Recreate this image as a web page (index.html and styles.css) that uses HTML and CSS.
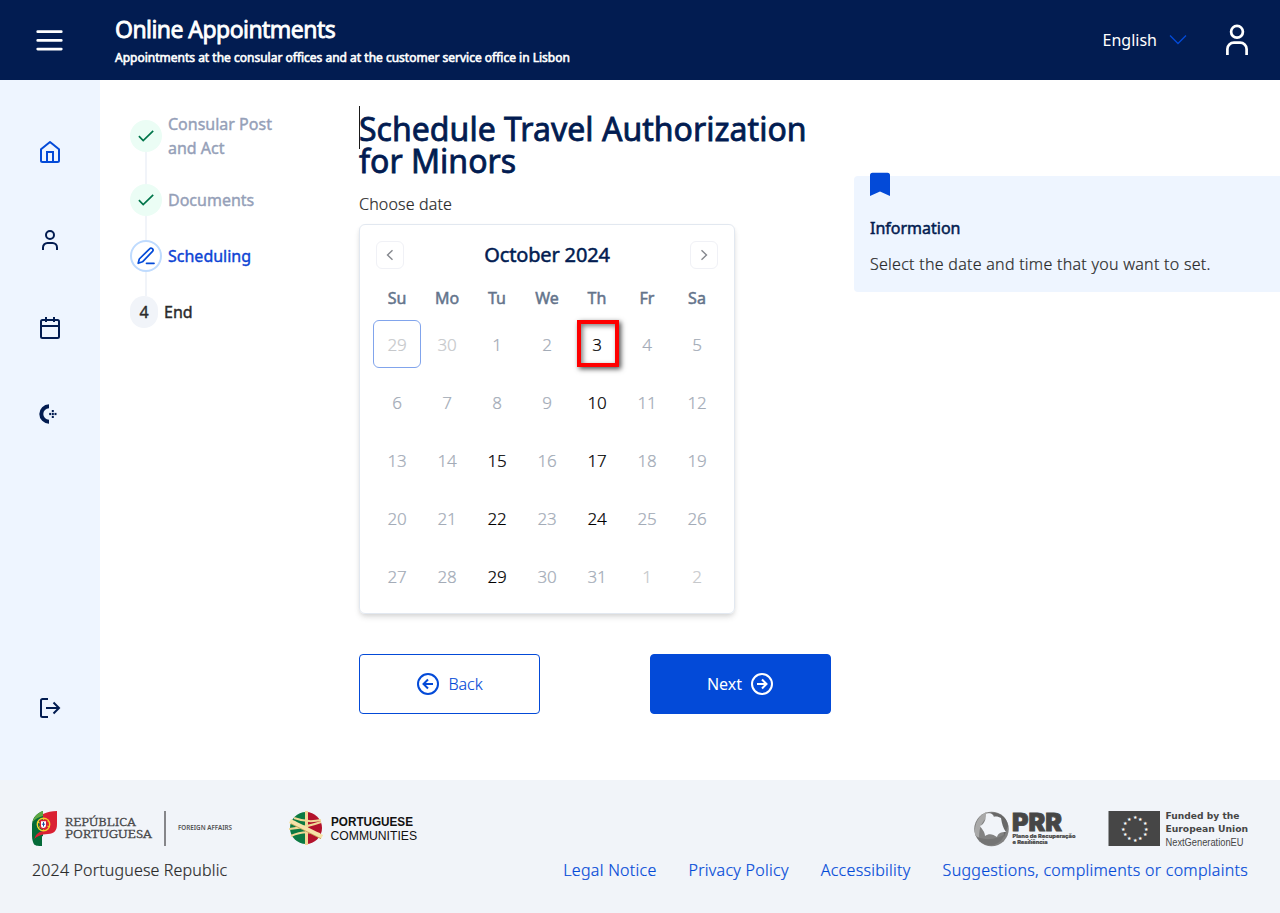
FILE: index.html
```html
<!DOCTYPE html>
<html lang="en">
<head>
    <meta charset="UTF-8">
    <meta name="viewport" content="width=device-width, initial-scale=1.0">
    <title>Online Appointments</title>
    <link rel="stylesheet" href="styles.css">
</head>
<body>
    <header class="header">
        <button class="icon-button menu-button" aria-label="Menu">
            <svg width="28" height="24" viewBox="0 0 28 24" fill="none" stroke="#fff" stroke-width="2.7" stroke-linecap="round"><path d="M1.700 3.7h23.6M1.700 12.4h23.6M1.700 21.1h23.6"/></svg>
        </button>
        <div class="brand">
            <div class="brand-title">Online Appointments</div>
            <div class="brand-subtitle">Appointments at the consular offices and at the customer service office in Lisbon</div>
        </div>
        <div class="language">
            <span>English</span>
            <svg width="18" height="12" viewBox="0 0 18 12" fill="none" stroke="#034ad8" stroke-width="1.3"><path d="M1 1.5l8 8 8-8"/></svg>
        </div>
        <svg class="account" width="24" height="32" viewBox="0 0 24 32" fill="none" stroke="#fff" stroke-width="2.7"><circle cx="12" cy="7.8" r="5.9"/><path d="M2.4 31v-6a6.5 6.5 0 0 1 6.5-6.3h6.2a6.5 6.5 0 0 1 6.5 6.3v6"/></svg>
    </header>

    <div class="page">
        <nav class="sidebar">
            <a class="nav-item">
                <svg width="24" height="24" viewBox="0 0 24 24" fill="none" stroke="#034ad8" stroke-width="2" stroke-linejoin="round"><path d="M3 9.2L12 2l9 7.2V20.500a1.500 1.500 0 0 1-1.500 1.500h-15A1.500 1.500 0 0 1 3 20.500z"/><path d="M9 22V12h6v10" stroke-linejoin="miter"/></svg>
            </a>
            <a class="nav-item">
                <svg width="24" height="24" viewBox="0 0 24 24" fill="none" stroke="#021c51" stroke-width="2"><circle cx="12" cy="7" r="4"/><path d="M5 22v-2.500a4.500 4.500 0 0 1 4.500-4.500h5a4.500 4.500 0 0 1 4.500 4.500V22"/></svg>
            </a>
            <a class="nav-item">
                <svg width="24" height="24" viewBox="0 0 24 24" fill="none" stroke="#021c51" stroke-width="2"><rect x="3" y="4" width="18" height="18" rx="1.500"/><path d="M8 1v5M16 1v5M3 10h18"/></svg>
            </a>
            <a class="nav-item">
                <svg width="24" height="24" viewBox="0 0 24 24" fill="#021c51"><path d="M11 4.300a7.700 7.700 0 0 0 0 15.400" fill="none" stroke="#021c51" stroke-width="4"/><rect x="11.200" y="10.900" width="1.900" height="2.200"/><rect x="13.800" y="10.900" width="2" height="2.200"/><rect x="16.500" y="10.900" width="2" height="2.200"/><rect x="13.800" y="8" width="2" height="2.100"/><rect x="13.800" y="13.900" width="2" height="2.100"/></svg>
            </a>
            <a class="nav-item nav-logout">
                <svg width="24" height="24" viewBox="0 0 24 24" fill="none" stroke="#021c51" stroke-width="2"><path d="M10 3H4.500A1.500 1.500 0 0 0 3 4.500v15A1.500 1.500 0 0 0 4.500 21H10M8 12h13M15.500 6.500L21 12l-5.500 5.500"/></svg>
            </a>
        </nav>

        <ol class="steps">
            <li class="step done">
                <span class="marker"><svg width="16" height="12" viewBox="0 0 16 12" fill="none" stroke="#00754a" stroke-width="1.700"><path d="M.9 6.200l4.300 4.400L15.200.9"/></svg></span>
                <span>Consular Post and Act</span>
            </li>
            <li class="step done">
                <span class="marker"><svg width="16" height="12" viewBox="0 0 16 12" fill="none" stroke="#00754a" stroke-width="1.700"><path d="M.9 6.200l4.300 4.400L15.200.9"/></svg></span>
                <span>Documents</span>
            </li>
            <li class="step active">
                <span class="marker"><svg width="18" height="18" viewBox="0 0 18 18" fill="none" stroke="#034ad8" stroke-width="1.700" stroke-linejoin="round" stroke-linecap="round"><path d="M12.600 1.800a1.900 1.900 0 0 1 2.900 2.600L5.500 14.800l-4.300 1.500 1.100-4.300z"/><path d="M9.500 16.300h7.500"/></svg></span>
                <span>Scheduling</span>
            </li>
            <li class="step pending">
                <span class="marker">4</span>
                <span>End</span>
            </li>
        </ol>

        <main class="content">
            <h1>Schedule Travel Authorization for Minors</h1>
            <p class="label">Choose date</p>

            <div class="calendar">
                <div class="calendar-header">
                    <button class="month-nav" aria-label="Previous month"><svg width="8" height="12" viewBox="0 0 8 12" fill="none" stroke="#85888e" stroke-width="1.400"><path d="M6.500 1.200L1.500 6l5 4.800"/></svg></button>
                    <span class="month">October 2024</span>
                    <button class="month-nav" aria-label="Next month"><svg width="8" height="12" viewBox="0 0 8 12" fill="none" stroke="#85888e" stroke-width="1.400"><path d="M1.500 1.200l5 4.800-5 4.800"/></svg></button>
                </div>
                <div class="weekdays">
                    <span>Su</span><span>Mo</span><span>Tu</span><span>We</span><span>Th</span><span>Fr</span><span>Sa</span>
                </div>
                <div class="days">
                    <span class="day other today">29</span><span class="day other">30</span><span class="day">1</span><span class="day">2</span><span class="day open marked">3</span><span class="day">4</span><span class="day">5</span>
                    <span class="day">6</span><span class="day">7</span><span class="day">8</span><span class="day">9</span><span class="day open">10</span><span class="day">11</span><span class="day">12</span>
                    <span class="day">13</span><span class="day">14</span><span class="day open">15</span><span class="day">16</span><span class="day open">17</span><span class="day">18</span><span class="day">19</span>
                    <span class="day">20</span><span class="day">21</span><span class="day open">22</span><span class="day">23</span><span class="day open">24</span><span class="day">25</span><span class="day">26</span>
                    <span class="day">27</span><span class="day">28</span><span class="day open">29</span><span class="day">30</span><span class="day">31</span><span class="day other">1</span><span class="day other">2</span>
                </div>
            </div>

            <div class="actions">
                <button class="button button-outline">
                    <svg width="24" height="24" viewBox="0 0 24 24" fill="none" stroke="currentColor" stroke-width="2"><circle cx="12" cy="12" r="10"/><path d="M17 12H8M12 7.500L7.500 12l4.500 4.500"/></svg>
                    <span>Back</span>
                </button>
                <button class="button button-primary">
                    <span>Next</span>
                    <svg width="24" height="24" viewBox="0 0 24 24" fill="none" stroke="currentColor" stroke-width="2"><circle cx="12" cy="12" r="10"/><path d="M7 12h9M12 7.500l4.500 4.500-4.500 4.500"/></svg>
                </button>
            </div>
        </main>

        <aside class="info">
            <svg class="bookmark" width="20" height="24" viewBox="0 0 20 24" fill="#034ad8"><path d="M0 3.200A2.500 2.500 0 0 1 2.500.7h15A2.500 2.500 0 0 1 20 3.200V24l-10-4.500L0 24z"/></svg>
            <h2>Information</h2>
            <p>Select the date and time that you want to set.</p>
        </aside>
    </div>

    <footer class="footer">
        <div class="logos">
            <!-- República Portuguesa -->
            <svg class="logo-republic" width="202" height="36" viewBox="0 0 202 36">
                <path d="M0 13C1 6 5 2 11 0v25C6 27 4 30 3 34 1 32 0 29 0 25z" fill="#046a38"/>
                <path d="M.5 11C2 5 6 2 11 0v5C7 6 3 8 .5 11z" fill="#5fa843"/>
                <path d="M11 3C15 1 20 .3 25 0v13c0 7-3 9.500-9 10-7 .6-11 2-13.500 5.500C3 24 6 21 11 20z" fill="#da2032"/>
                <path d="M1.500 32c.5-5 3.500-6.500 8.500-7v10C6 35 2.500 35 1.500 32z" fill="#046a38"/>
                <circle cx="11.500" cy="13.500" r="6.200" fill="none" stroke="#f2d32c" stroke-width="1.400"/>
                <path d="M5.500 11l12 5M6 17l11-8M11.500 7v13" stroke="#f2d32c"/>
                <path d="M8.300 9.500h6.400v5a3.200 3.200 0 0 1-6.400 0z" fill="#fff" stroke="#da2032" stroke-width="1.400"/>
                <path d="M11.500 11v4.500M9.900 13.200h3.200" stroke="#1d4a9c"/>
                <g font-family="'Noto Serif', 'DejaVu Serif', serif" font-size="11.500" fill="#48484a" stroke="#48484a" stroke-width=".4">
                    <text x="33" y="14.500" textLength="71" lengthAdjust="spacingAndGlyphs">REPÚBLICA</text>
                    <text x="33" y="27" textLength="87" lengthAdjust="spacingAndGlyphs">PORTUGUESA</text>
                </g>
                <path d="M133 0v35" stroke="#86868a" stroke-width="2"/>
                <text x="146" y="19" font-family="'Noto Sans', sans-serif" font-size="6.300" font-weight="600" fill="#505052" textLength="54" lengthAdjust="spacingAndGlyphs">FOREIGN AFFAIRS</text>
            </svg>
            <!-- Portuguese Communities -->
            <svg class="logo-communities" width="130" height="36" viewBox="0 0 130 36">
                <clipPath id="globe"><circle cx="17" cy="17" r="16"/></clipPath>
                <g clip-path="url(#globe)">
                    <path d="M0 0h18v34H0z" fill="#0b7a42"/>
                    <path d="M18 0h16v34H18z" fill="#b3122c"/>
                </g>
                <g fill="none" stroke="#f0d896" stroke-width="2">
                    <path d="M5 7c8 3 18 4 27 2M2 25c8-4 18-5 29-2"/>
                    <path d="M17.500 0v34" stroke-width="3"/>
                    <path d="M0 18c10-1 21-3 32-7" stroke-width="2"/>
                    <path d="M1 10c10 5 21 10 32 16" stroke="#f6e2a8" stroke-width="4.500"/>
                    <path d="M2 12.700c10 5 20 10 30 15" stroke="#b79345" stroke-width=".7"/>
                </g>
                <text x="42" y="14.500" class="logo-text" font-size="12" font-weight="bold" textLength="82" lengthAdjust="spacingAndGlyphs">PORTUGUESE</text>
                <text x="41.500" y="28.500" class="logo-text" font-size="13" textLength="86.500" lengthAdjust="spacingAndGlyphs">COMMUNITIES</text>
            </svg>
            <div class="logos-right">
                <!-- PRR -->
                <svg width="103" height="36" viewBox="0 0 103 36">
                    <circle cx="17.500" cy="18" r="17.300" fill="#828282"/>
                    <path d="M1 24C0 12 5 5 12 1l5 2C9 9 5 14 5 27z" fill="#a9a9a9"/>
                    <path d="M17 2c8-1 16 4 17 13l-4 11c0-11-3-17-13-24z" fill="#686868"/>
                    <path d="M3 26c10 4 21 2 28-3-3 8-10 12-16 11-6 0-10-4-12-8z" fill="#747474"/>
                    <path d="M12 3c4-2 7 0 8 3 2-1 5 0 7 1 1 6 2 10 5 14-5 0-8 1-9 5-4-3-8-4-12-1 0-4-3-7-5-10 4-2 6-6 6-12z" fill="#f1f4f9"/>
                    <g fill="#464646" stroke="#464646">
                        <text x="38" y="19.800" font-family="Inter, sans-serif" font-weight="900" font-size="24" stroke-width=".8" textLength="50" lengthAdjust="spacingAndGlyphs">PRR</text>
                        <text x="38.500" y="27" font-family="Inter, sans-serif" font-weight="800" font-size="5" stroke-width=".2" textLength="63" lengthAdjust="spacingAndGlyphs">Plano de Recuperação</text>
                        <text x="38.500" y="33.200" font-family="Inter, sans-serif" font-weight="800" font-size="5" stroke-width=".2" textLength="35" lengthAdjust="spacingAndGlyphs">e Resiliência</text>
                    </g>
                </svg>
                <!-- European Union -->
                <svg width="140" height="36" viewBox="0 0 140 36" fill="#464646">
                    <path d="M0.500 0h51.500v35h-51.500z"/>
                    <g fill="#fff" font-family="'DejaVu Sans', sans-serif" font-size="5" text-anchor="middle">
                        <text x="26.500" y="8.300">★</text><text x="32.300" y="9.800">★</text><text x="36.500" y="14">★</text><text x="38" y="19.500">★</text><text x="36.500" y="25">★</text><text x="32.300" y="29">★</text><text x="26.500" y="30.500">★</text><text x="20.700" y="29">★</text><text x="16.500" y="25">★</text><text x="15" y="19.500">★</text><text x="16.500" y="14">★</text><text x="20.700" y="9.800">★</text>
                    </g>
                    <g font-family="'DejaVu Sans', sans-serif" font-weight="bold" font-size="9">
                        <text x="57.500" y="7.500" textLength="74" lengthAdjust="spacingAndGlyphs">Funded by the</text>
                        <text x="57.500" y="20.500" textLength="82.500" lengthAdjust="spacingAndGlyphs">European Union</text>
                    </g>
                    <text x="57.500" y="35" font-family="'Liberation Sans', sans-serif" font-size="10" textLength="78" lengthAdjust="spacingAndGlyphs">NextGenerationEU</text>
                </svg>
            </div>
        </div>
        <div class="footer-links">
            <span>2024 Portuguese Republic</span>
            <nav>
                <a>Legal Notice</a>
                <a>Privacy Policy</a>
                <a>Accessibility</a>
                <a>Suggestions, compliments or complaints</a>
            </nav>
        </div>
    </footer>
</body>
</html>
```
FILE: styles.css
```css
*, *::before, *::after {
    box-sizing: border-box;
}
body {
    margin: 0;
    font-family: "Noto Sans", sans-serif;
    font-size: 16px;
    line-height: 24px;
    font-weight: 300;
    letter-spacing: 0.16px;
    color: #2b2b2b;
    background: #fff;
}
h1, h2, p, ol {
    margin: 0;
    padding: 0;
    list-style: none;
}
svg {
    display: block;
    flex: none;
    letter-spacing: 0;
}
button {
    font: inherit;
    padding: 0;
    cursor: pointer;
}

/* Header */
.header {
    height: 80px;
    background: #021c51;
    color: #fff;
    display: flex;
    align-items: center;
    padding: 0 31px 0 36px;
    letter-spacing: 0;
}
.icon-button {
    background: none;
    border: none;
}
.brand {
    margin-left: 51px;
    padding-top: 5px;
    flex: 1;
    white-space: nowrap;
}
.brand-title {
    font-size: 23px;
    line-height: 31px;
    font-weight: 400;
    letter-spacing: -0.55px;
    -webkit-text-stroke: 0.8px;
}
.brand-subtitle {
    font-size: 12px;
    line-height: 26px;
    font-weight: 400;
    letter-spacing: 0;
    -webkit-text-stroke: 0.6px;
}
.language {
    display: flex;
    align-items: center;
    gap: 12px;
    font-weight: 400;
    margin-right: 38px;
}

/* Page columns */
.page {
    display: flex;
    align-items: flex-start;
    height: 700px;
}
.sidebar {
    width: 100px;
    height: 700px;
    padding: 60px 0 60px;
    background: #eef5ff;
    display: flex;
    flex-direction: column;
    align-items: center;
    gap: 64px;
}
.nav-item:nth-child(4) {
    margin-top: -2px;
}
.nav-logout {
    margin-top: auto;
}

/* Steps */
.steps {
    width: 229px;
    padding: 32px 64px 0 0;
    margin-left: 30px;
    display: flex;
    flex-direction: column;
    gap: 24px;
    letter-spacing: 0;
}
.step {
    display: flex;
    align-items: center;
    gap: 6px;
    font-weight: 400;
    -webkit-text-stroke: 0.4px;
}
.marker {
    position: relative;
    width: 32px;
    height: 32px;
    flex: none;
    border-radius: 50%;
    display: flex;
    align-items: center;
    justify-content: center;
}
.step:not(:last-child) .marker::after {
    content: "";
    position: absolute;
    left: 15px;
    top: 32px;
    width: 2px;
    height: 24px;
    background: #f1f4f9;
}
.step:first-child .marker::after {
    height: 32px;
}
.done {
    color: #95a0b8;
}
.done .marker {
    background: #ebfdf5;
}
.active {
    color: #0c43d4;
}
.active .marker {
    border: 2px solid #bfdbfe;
}
.step.active .marker::after {
    left: 13px;
    top: 30px;
}
.pending .marker {
    width: 28px;
    border-radius: 14px;
    background: #f1f4f9;
}

/* Content */
.content {
    width: 472px;
    padding-top: 32px;
}
h1 {
    font-size: 32px;
    line-height: 32px;
    font-weight: 400;
    letter-spacing: 0.03px;
    color: #021c51;
    -webkit-text-stroke: 0.8px;
    /* text caret at the start of the heading */
    background: linear-gradient(#1a1a1a, #1a1a1a) 0 0 / 1px 43px no-repeat;
    margin-top: -6px;
    padding-top: 7px;
}
.label {
    margin-top: 15px;
}
.calendar {
    width: 376px;
    height: 390px;
    margin-top: 8px;
    padding: 16px 12px 0;
    border: 1px solid #e2e8f0;
    border-radius: 6px;
    box-shadow: 0 4px 6px -1px rgba(0, 0, 0, 0.12), 0 2px 4px -1px rgba(0, 0, 0, 0.08);
    letter-spacing: 0;
}
.calendar-header {
    display: flex;
    align-items: center;
    justify-content: space-between;
    padding: 0 4px;
}
.month-nav {
    width: 28px;
    height: 28px;
    display: flex;
    align-items: center;
    justify-content: center;
    background: #fff;
    border: 1px solid #f0f1f6;
    border-radius: 6px;
}
.month {
    font-size: 20px;
    font-weight: 400;
    letter-spacing: -0.15px;
    color: #021c51;
    -webkit-text-stroke: 0.5px;
}
.weekdays, .days {
    display: grid;
    grid-template-columns: repeat(7, 50px);
    text-align: center;
}
.weekdays {
    margin-top: 17px;
    font-weight: 400;
    color: #64748b;
    -webkit-text-stroke: 0.5px;
}
.days {
    margin-top: 10px;
    row-gap: 10px;
}
.day {
    position: relative;
    width: 48px;
    height: 48px;
    margin: 0 1px;
    line-height: 49px;
    font-size: 17px;
    letter-spacing: -0.3px;
    color: #a3abb7;
    -webkit-text-stroke: 0.2px;
}
.other {
    color: #c6c8cb;
}
.open {
    color: #000;
}
.today {
    line-height: 47px;
    border: 1px solid #81a4ec;
    border-radius: 6px;
}
.marked::after {
    content: "";
    position: absolute;
    left: 4px;
    top: 0;
    width: 42px;
    height: 47px;
    border: 4px solid #fe0000;
    box-shadow: 2px 2px 5px rgba(0, 0, 0, 0.7), inset 2px 2px 5px rgba(0, 0, 0, 0.5);
}
.actions {
    display: flex;
    justify-content: space-between;
    margin-top: 40px;
}
.button {
    width: 181px;
    height: 60px;
    display: flex;
    align-items: center;
    justify-content: center;
    gap: 8px;
    border: 1px solid #034ad8;
    border-radius: 4px;
}
.button-outline {
    background: #fff;
    color: #034ad8;
    -webkit-text-stroke: 0.15px;
}
.button-primary {
    background: #034ad8;
    color: #fff;
    font-weight: 400;
}

/* Information */
.info {
    position: relative;
    flex: 1;
    height: 116px;
    margin: 96px 0 0 23px;
    padding: 40px 16px 0;
    background: #eef5ff;
    border-radius: 4px 0 0 4px;
}
.bookmark {
    position: absolute;
    left: 16px;
    top: -4px;
}
.info h2 {
    font-size: 16px;
    line-height: 24px;
    font-weight: 400;
    letter-spacing: 0;
    color: #021c51;
    -webkit-text-stroke: 0.5px;
}
.info p {
    margin-top: 12px;
    letter-spacing: 0.27px;
}
.label, .info p, .footer-links {
    -webkit-text-stroke: 0.2px;
}

/* Footer */
.footer {
    height: 133px;
    padding: 31px 32px 0;
    background: #f1f4f9;
}
.logos {
    display: flex;
    align-items: flex-start;
}
.logo-communities {
    margin-left: 55px;
}
.logo-text {
    font-family: "Liberation Sans", sans-serif;
    fill: #111;
}
.logos-right {
    display: flex;
    gap: 31px;
    margin-left: auto;
}
.footer-links {
    display: flex;
    justify-content: space-between;
    margin-top: 11px;
}
.footer-links nav {
    display: flex;
    gap: 32px;
}
.footer-links a {
    color: #034ad8;
    letter-spacing: 0.28px;
}
```
